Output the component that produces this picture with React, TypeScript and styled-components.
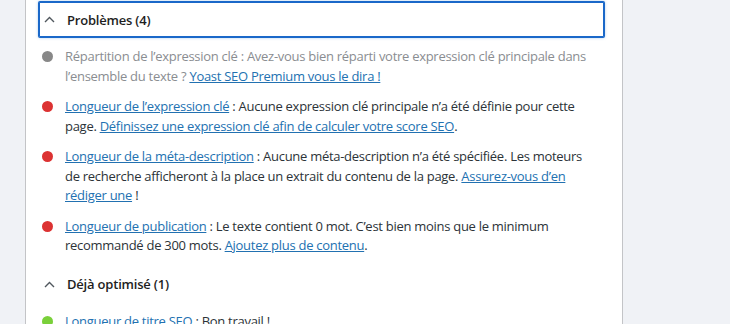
import React from 'react'
import styled, { createGlobalStyle } from 'styled-components'

const GlobalStyle = createGlobalStyle`
  html, body {
    margin: 0;
    padding: 0;
    background: #f0f2f6;
  }
`

const Page = styled.div`
  display: flex;
  height: 324px;
  overflow: hidden;
  font-family: 'Open Sans', 'Noto Sans', sans-serif;
  font-size: 13px;
  letter-spacing: -0.28px;
  color: #2c3338;
`

const Gutter = styled.div`
  width: 25px;
  flex-shrink: 0;
  border-right: 1px solid #c3c4c7;
`

const Panel = styled.div`
  width: 597px;
  flex-shrink: 0;
  background: #fff;
  border-right: 1px solid #c3c4c7;
  padding: 2px 18px 0 13px;
  box-sizing: border-box;
`

const SectionHeader = styled.button<{ focused?: boolean }>`
  display: flex;
  align-items: center;
  gap: 12px;
  width: 100%;
  height: 35px;
  padding: 0 0 0 4px;
  background: #fff;
  border: 1px solid ${({ focused }) => (focused ? '#1a68c9' : 'transparent')};
  box-shadow: ${({ focused }) =>
    focused ? '0 0 0 1px #1a68c9, 0 0 3px 1px rgba(30, 120, 210, 0.35)' : 'none'};
  border-radius: 1px;
  font-family: inherit;
  font-size: 13px;
  letter-spacing: -0.2px;
  font-weight: 600;
  color: #1e1e1e;
  cursor: pointer;
  text-align: left;
`

const List = styled.ul`
  list-style: none;
  margin: 10px 0 0;
  padding: 0 0 0 3px;
`

const Item = styled.li`
  display: flex;
  align-items: flex-start;
  gap: 12px;
  margin-bottom: 11px;
  line-height: 19.5px;
`

const Bullet = styled.span<{ color: string }>`
  flex-shrink: 0;
  width: 11px;
  height: 11px;
  margin-top: 4px;
  border-radius: 50%;
  background: ${({ color }) => color};
`

const Text = styled.p<{ muted?: boolean }>`
  margin: 0;
  white-space: nowrap;
  color: ${({ muted }) => (muted ? '#8a8d91' : '#2c3338')};
`

const Link = styled.a`
  color: #2271b1;
  text-decoration: underline;
`

const Chevron = () => (
  <svg width="11" height="7" viewBox="0 0 11 7">
    <polyline points="1,6 5.5,1.5 10,6" fill="none" stroke="#50575e" strokeWidth="1.4" />
  </svg>
)

const RED = '#dc3232'

const App = () => (
  <>
    <GlobalStyle />
    <Page>
      <Gutter />
      <Panel>
        <SectionHeader focused>
          <Chevron />
          Problèmes (4)
        </SectionHeader>
        <List>
          <Item>
            <Bullet color="#888" />
            <Text muted>
              Répartition de l’expression clé : Avez-vous bien réparti votre expression clé principale dans
              <br />
              l’ensemble du texte ? <Link href="#">Yoast SEO Premium vous le dira !</Link>
            </Text>
          </Item>
          <Item>
            <Bullet color={RED} />
            <Text>
              <Link href="#">Longueur de l’expression clé</Link> : Aucune expression clé principale n’a été définie pour cette
              <br />
              page. <Link href="#">Définissez une expression clé afin de calculer votre score SEO</Link>.
            </Text>
          </Item>
          <Item>
            <Bullet color={RED} />
            <Text>
              <Link href="#">Longueur de la méta-description</Link> : Aucune méta-description n’a été spécifiée. Les moteurs
              <br />
              de recherche afficheront à la place un extrait du contenu de la page. <Link href="#">Assurez-vous d’en</Link>
              <br />
              <Link href="#">rédiger une</Link> !
            </Text>
          </Item>
          <Item>
            <Bullet color={RED} />
            <Text>
              <Link href="#">Longueur de publication</Link> : Le texte contient 0 mot. C’est bien moins que le minimum
              <br />
              recommandé de 300 mots. <Link href="#">Ajoutez plus de contenu</Link>.
            </Text>
          </Item>
        </List>
        <SectionHeader>
          <Chevron />
          Déjà optimisé (1)
        </SectionHeader>
        <List>
          <Item>
            <Bullet color="#7ad03a" />
            <Text>
              <Link href="#">Longueur de titre SEO</Link> : Bon travail !
            </Text>
          </Item>
        </List>
      </Panel>
    </Page>
  </>
)

export default App
